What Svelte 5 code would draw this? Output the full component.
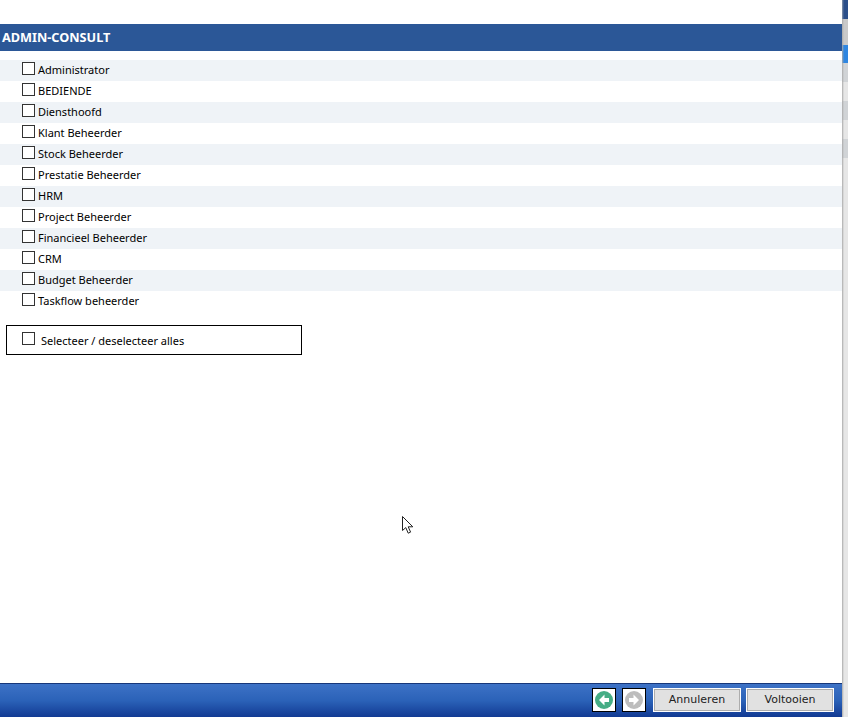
<script lang="ts">
  const roles = [
    'Administrator',
    'BEDIENDE',
    'Diensthoofd',
    'Klant Beheerder',
    'Stock Beheerder',
    'Prestatie Beheerder',
    'HRM',
    'Project Beheerder',
    'Financieel Beheerder',
    'CRM',
    'Budget Beheerder',
    'Taskflow beheerder'
  ];
  const bands = [true, false, true, false, true];
</script>

<div class="window">
  <main class="content">
    <h2 class="section-title">ADMIN-CONSULT</h2>

    <ul class="roles">
      {#each roles as role}
        <li class="role">
          <span class="check"></span>
          <span class="role-label">{role}</span>
        </li>
      {/each}
    </ul>

    <div class="select-all">
      <span class="check"></span>
      <span class="select-label">Selecteer / deselecteer alles</span>
    </div>

    <svg class="cursor" width="14" height="20" viewBox="0 0 14 20">
      <path d="M1.5 1.5 V15.5 L4.8 12.6 L7.2 18.2 L9.6 17.1 L7.2 11.8 L11.8 11.8 Z" fill="#fff" stroke="#222" stroke-width="1" />
    </svg>

    <footer class="footer">
      <button class="nav">
        <svg width="20" height="20" viewBox="0 0 20 20">
          <circle cx="10" cy="10" r="9" fill="#45ad85" />
          <path d="M10.5 4.5 L5 10 L10.5 15.5 V12 H15 V8 H10.5 Z" fill="#fff" />
        </svg>
      </button>
      <button class="nav">
        <svg width="20" height="20" viewBox="0 0 20 20">
          <circle cx="10" cy="10" r="9" fill="#bdbdbd" />
          <path d="M9.5 4.5 L15 10 L9.5 15.5 V12 H5 V8 H9.5 Z" fill="#fff" />
        </svg>
      </button>
      <button class="action cancel">Annuleren</button>
      <button class="action finish">Voltooien</button>
    </footer>
  </main>

  <aside class="edge">
    <div class="edge-dark"></div>
    <div class="edge-grey"></div>
    <div class="edge-blue"></div>
    {#each bands as dark}
      <div class="edge-band" class:dark></div>
    {/each}
    <div class="edge-rest"></div>
  </aside>
</div>

<style>
  :global(body) {
    margin: 0;
    background: #fff;
  }

  .window {
    display: flex;
    width: 848px;
    height: 717px;
    overflow: hidden;
    font-family: 'Noto Sans', Tahoma, sans-serif;
    color: #000;
  }

  .content {
    position: relative;
    display: flex;
    flex-direction: column;
    width: 842px;
    padding-top: 24px;
    box-sizing: border-box;
    background: #fff;
  }

  .section-title {
    height: 27px;
    margin: 0 0 9px;
    padding-left: 2px;
    background: #2b5797;
    color: #fff;
    font-size: 12.7px;
    font-weight: 700;
    line-height: 27px;
  }

  .roles {
    margin: 0;
    padding: 0;
    list-style: none;
  }

  .role {
    display: flex;
    align-items: center;
    height: 21px;
    padding-left: 22px;
    font-size: 11px;
  }

  .role:nth-child(odd) {
    background: #eff3f7;
  }

  .check {
    flex: none;
    width: 11px;
    height: 11px;
    margin-top: -4px;
    background: #fff;
    border: 1px solid #333;
  }

  .role-label {
    margin-left: 3px;
    margin-top: -3px;
  }

  .select-all {
    display: flex;
    align-items: center;
    width: 296px;
    height: 30px;
    margin: 13px 0 0 6px;
    padding-left: 15px;
    box-sizing: border-box;
    border: 1px solid #000;
    font-size: 11px;
  }

  .select-label {
    margin-left: 6px;
  }

  .cursor {
    position: absolute;
    left: 401px;
    top: 515px;
  }

  .footer {
    display: flex;
    align-items: center;
    justify-content: flex-end;
    gap: 6px;
    height: 34px;
    margin-top: auto;
    padding-right: 8px;
    padding-bottom: 2px;
    box-sizing: border-box;
    border-top: 1px solid #17377a;
    background: linear-gradient(#3d72c6, #2b62b8 50%, #123a93);
  }

  .nav {
    display: flex;
    align-items: center;
    justify-content: center;
    width: 24px;
    height: 24px;
    padding: 0;
    background: #fff;
    border: 1px solid #000;
  }

  .action {
    width: 88px;
    height: 24px;
    padding: 0;
    background: #e1e1e1;
    border: 1px solid #fff;
    outline: 1px solid #adadad;
    outline-offset: -2px;
    color: #222;
    font-family: 'DejaVu Sans', Verdana, sans-serif;
    font-size: 11px;
  }

  .cancel {
    margin-left: 1px;
  }

  .finish {
    margin-left: -1px;
  }

  .edge {
    display: flex;
    flex-direction: column;
    width: 6px;
  }

  .edge-dark {
    height: 19px;
    background: linear-gradient(90deg, #8a97ab, #2b4f8a 2px);
  }

  .edge-grey {
    height: 26px;
    background: linear-gradient(90deg, #aaa, #c9c9c9 2px);
  }

  .edge-blue {
    height: 18px;
    background: linear-gradient(90deg, #aaa, #2f86e0 2px);
  }

  .edge-band {
    height: 19px;
    background: linear-gradient(90deg, #aaa, #e6e6e6 2px);
  }

  .edge-band.dark {
    background: linear-gradient(90deg, #aaa, #d0d3d6 2px);
  }

  .edge-rest {
    flex: 1;
    background: linear-gradient(90deg, #aaa, #e6e6e6 2px);
  }
</style>
